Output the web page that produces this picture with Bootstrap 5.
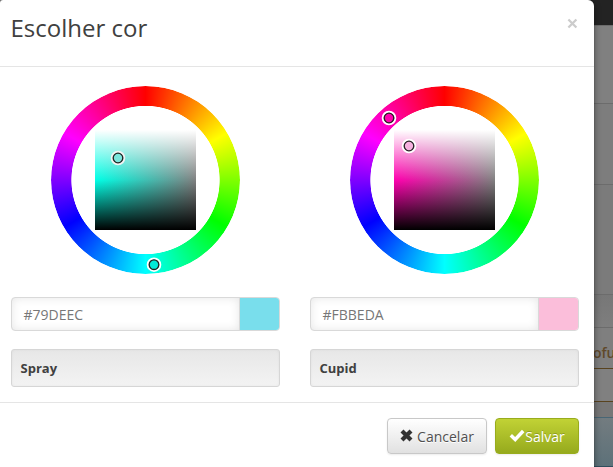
<!DOCTYPE html>
<html lang="pt">
<head>
<meta charset="utf-8">
<title>Escolher cor</title>
<link rel="stylesheet" href="https://cdn.jsdelivr.net/npm/bootstrap@5.3.0/dist/css/bootstrap.min.css">
<style>
body{font-family:"Open Sans","Noto Sans",sans-serif;background:#7d7d7d;width:613px;height:467px;overflow:hidden;font-size:14px;color:#404040}
.page-behind{width:100px;height:467px;right:0;top:0}
.page-behind>div{border-bottom:1px solid #6c6c6c;flex:none}
.strip-top{height:26px;background:#232323}
.strip-a{height:78px;background:#808080}
.strip-b{height:81px;background:#7d7d7d}
.strip-c{height:110px;background:#7b7b7b}
.strip-d{height:33px;background:linear-gradient(#777,#7e7e7e)}
.page-behind>.strip-e{height:41px;background:#7f7f7f;border-color:#59431f;color:#60492a;font-weight:600;font-size:14px;line-height:50px;padding-left:80px}
.page-behind>.strip-f{height:33px;background:#808080;border-color:#59431f}
.page-behind>.strip-g{height:16px;background:#777;border-color:#486675}
.page-behind>.strip-h{height:49px;background:linear-gradient(#737c80,#5d7179);border-color:#2f4e5d}
.picker-dialog{width:594px;height:480px;border-radius:0 6px 6px 0;border-top-left-radius:3px;box-shadow:0 3px 7px rgba(0,0,0,.45),0 0 1px #333;background:#fff}
.dlg-head{height:67px;border-bottom:1px solid #e5e5e5;padding:10px 15px 0 10.5px}
.dlg-head h3{font-size:24px;line-height:36px;font-weight:400;margin:0}
.dlg-close{border:0;background:none;padding:0;width:14px;height:24px;line-height:0;margin-top:1px}
.dlg-body{height:336px;padding:19px 15px 0 11px;border-bottom:1px solid #e5e5e5;gap:30px}
.picker-col{width:269px}
.wheel{width:189px;height:188px;margin-left:40px}
.ring{inset:0;border-radius:50%;background:conic-gradient(red,#ff0 60deg,#0f0 120deg,#0ff 180deg,#00f 240deg,#f0f 300deg,red);-webkit-mask:radial-gradient(circle,transparent 73.8px,#000 74.5px);mask:radial-gradient(circle,transparent 73.8px,#000 74.5px)}
.shade{left:44px;top:44px;width:101px;height:100px}
.shade-cyan{background:linear-gradient(#fff,rgba(255,255,255,0) 50%,rgba(0,0,0,0) 50%,#000),linear-gradient(90deg,#00ffe6,#808080)}
.shade-pink{background:linear-gradient(#fff,rgba(255,255,255,0) 50%,rgba(0,0,0,0) 50%,#000),linear-gradient(90deg,#ff00ae,#808080)}
.knob{width:15px;height:15px;overflow:visible}
.k-cyan-hue{left:95px;top:170.5px}.k-cyan-tone{left:59px;top:64px}
.k-pink-hue{left:31px;top:24px}.k-pink-tone{left:51px;top:52px}
.hex-row{height:34px;margin-top:23px;border:1px solid #d9d9d9;border-radius:4px;overflow:hidden}
.hex-text{color:#777;font-size:14px;padding-left:11.5px;line-height:34px;box-shadow:inset 0 0 10px rgba(0,0,0,.1);border-right:1px solid #d9d9d9}
.swatch{width:39px}
.sw-cyan{background:#79deec}.sw-pink{background:#fbbeda}
.name-row{height:38px;margin-top:18px;border:1px solid #d6d6d6;border-radius:3px;background:linear-gradient(#e7e7e7,#f3f3f3);box-shadow:inset 0 0 3px rgba(0,0,0,.05);font-size:13px;font-weight:700;line-height:36px;padding-left:8.5px}
.dlg-foot{padding:15px 15px 0 0;gap:8px}
.act{height:36px;border-radius:4px;font-size:14px;line-height:20px;padding:1px 0 0;color:#505050;box-shadow:0 1px 2px rgba(0,0,0,.08)}
.act-cancel{width:100px;border:1px solid #c8c8c8;background:linear-gradient(#fff,#e1e1e1);text-shadow:0 1px 0 #fff}
.act-save{width:84px;border:1px solid #98ac1d;background:linear-gradient(#c1d235,#96aa1d);color:#fff;text-shadow:0 -1px 0 rgba(0,0,0,.2)}
.act-save:hover{color:#fff}
.act svg{margin-top:-2px}
</style>
</head>
<body>
<div class="page-behind position-absolute d-flex flex-column">
  <div class="strip-top"></div><div class="strip-a"></div><div class="strip-b"></div><div class="strip-c"></div><div class="strip-d"></div>
  <div class="strip-e">ofu</div><div class="strip-f"></div><div class="strip-g"></div><div class="strip-h"></div>
</div>
<div class="picker-dialog position-relative">
  <div class="dlg-head d-flex justify-content-between align-items-start">
    <h3>Escolher cor</h3>
    <button class="dlg-close" aria-label="Fechar"><svg width="14" height="24" viewBox="0 0 14 24"><path d="M3.4 8.5l8 8M11.4 8.5l-8 8" stroke="#ccc" stroke-width="2.3"/></svg></button>
  </div>
  <div class="dlg-body d-flex">
    <div class="picker-col">
      <div class="wheel position-relative">
        <div class="ring position-absolute"></div>
        <div class="shade shade-cyan position-absolute"></div>
        <svg class="knob k-cyan-hue position-absolute" viewBox="0 0 15 15"><circle cx="8" cy="7.7" r="6.3" fill="#00ead8" stroke="#fff" stroke-width="2"/><circle cx="8" cy="7.7" r="4.8" fill="none" stroke="#222" stroke-width="1.3"/></svg>
        <svg class="knob k-cyan-tone position-absolute" viewBox="0 0 15 15"><circle cx="8" cy="8" r="6.3" fill="#79e6dc" stroke="#f2f2f2" stroke-width="2"/><circle cx="8" cy="8" r="4.8" fill="none" stroke="#222" stroke-width="1.3"/></svg>
      </div>
      <div class="hex-row d-flex"><div class="hex-text flex-grow-1">#79DEEC</div><div class="swatch sw-cyan"></div></div>
      <div class="name-row">Spray</div>
    </div>
    <div class="picker-col">
      <div class="wheel position-relative">
        <div class="ring position-absolute"></div>
        <div class="shade shade-pink position-absolute"></div>
        <svg class="knob k-pink-hue position-absolute" viewBox="0 0 15 15"><circle cx="8" cy="8" r="6.3" fill="#ff00ae" stroke="#fff" stroke-width="2"/><circle cx="8" cy="8" r="4.8" fill="none" stroke="#222" stroke-width="1.3"/></svg>
        <svg class="knob k-pink-tone position-absolute" viewBox="0 0 15 15"><circle cx="8" cy="8" r="6.3" fill="#f6b0df" stroke="#fff" stroke-width="2"/><circle cx="8" cy="8" r="4.8" fill="none" stroke="#222" stroke-width="1.3"/></svg>
      </div>
      <div class="hex-row d-flex"><div class="hex-text flex-grow-1">#FBBEDA</div><div class="swatch sw-pink"></div></div>
      <div class="name-row">Cupid</div>
    </div>
  </div>
  <div class="dlg-foot d-flex justify-content-end">
    <button class="btn act act-cancel d-flex align-items-center justify-content-center"><svg class="me-1" width="13" height="13" viewBox="0 0 13 13"><path d="M2 2l9 9M11 2l-9 9" stroke="#333" stroke-width="4.2"/></svg>Cancelar</button>
    <button class="btn act act-save d-flex align-items-center justify-content-center"><svg width="16" height="13" viewBox="0 0 16 13"><path d="M1.8 6.2l4.4 4.3L14.2 2" fill="none" stroke="#fff" stroke-width="3.4"/></svg>Salvar</button>
  </div>
</div>
<script src="https://cdn.jsdelivr.net/npm/bootstrap@5.3.0/dist/js/bootstrap.bundle.min.js"></script>
</body>
</html>
